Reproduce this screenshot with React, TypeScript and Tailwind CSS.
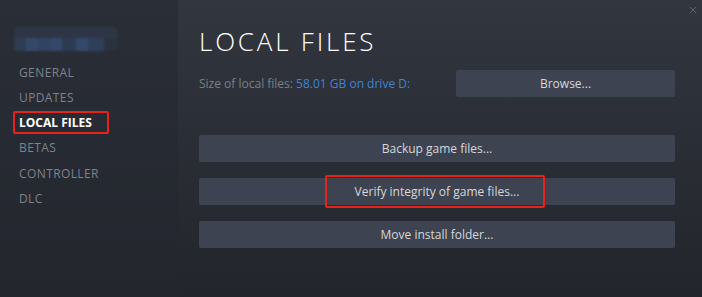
import { X } from "lucide-react";

const navItems = ["GENERAL", "UPDATES", "LOCAL FILES", "BETAS", "CONTROLLER", "DLC"];

const actions = ["Backup game files...", "Verify integrity of game files...", "Move install folder..."];

export default function App() {
    return (
        <div
            className="relative flex w-[702px] h-[297px] overflow-hidden"
            style={{ fontFamily: '"Open Sans", "Liberation Sans", sans-serif' }}
        >
            <aside className="w-[178px] shrink-0 bg-gradient-to-b from-[#2a2e37] to-[#23262d] pt-[27px]">
                {/* blurred game title */}
                <div className="ml-[14px] w-[104px] h-[24px] flex flex-col rounded-r-md overflow-hidden blur-[1px]">
                    <div className="h-[11px] bg-[#2e3645]" />
                    <div className="h-[13px] flex">
                        <div className="w-[12px] bg-[#2f3d52]" />
                        <div className="w-[12px] bg-[#34496a]" />
                        <div className="w-[12px] bg-[#314360]" />
                        <div className="w-[12px] bg-[#33486a]" />
                        <div className="w-[14px] bg-[#2d3b52]" />
                        <div className="w-[12px] bg-[#34496a]" />
                        <div className="w-[16px] bg-[#2f405b]" />
                        <div className="flex-1 bg-[#2b323f]" />
                    </div>
                </div>

                <nav className="mt-[9px] flex flex-col gap-[0.25px]">
                    {navItems.map((item) => {
                        const active = item === "LOCAL FILES";
                        return (
                            <div
                                key={item}
                                className={`relative h-[25px] flex items-center pl-[19px] text-[12px] ${
                                    active ? "text-white font-bold" : "text-[#7d828b] font-medium tracking-[0.4px]"
                                }`}
                            >
                                {item}
                                {active && (
                                    <span className="absolute left-[13px] top-[0px] w-[96px] h-[23px] border-2 border-[#e8231c] rounded-[2px]" />
                                )}
                            </div>
                        );
                    })}
                </nav>
            </aside>

            <main className="flex-1 bg-gradient-to-b from-[#32363f] to-[#22252b] pl-[21px] pr-[27px] pt-[28px]">
                <h1 className="text-[26px] leading-[26px] font-light text-white tracking-[2.8px]">LOCAL FILES</h1>

                <div className="mt-[16px] flex items-center justify-between">
                    <p className="text-[12px] text-[#7b8089]">
                        Size of local files: <span className="text-[#3f82d8]">58.01 GB on drive D:</span>
                    </p>
                    <button className="w-[219px] h-[27px] rounded-[2px] bg-[#3d4350] text-[12px] text-[#d6d8db]">
                        Browse...
                    </button>
                </div>

                <div className="mt-[38px] flex flex-col gap-[16px]">
                    {actions.map((label) => (
                        <button
                            key={label}
                            className="relative h-[27px] rounded-[2px] bg-[#3d4350] text-[12px] text-[#d6d8db]"
                        >
                            {label}
                            {label.startsWith("Verify") && (
                                <span className="absolute left-[126px] top-[-3px] w-[220px] h-[33px] border-2 border-[#e8231c] rounded-[2px]" />
                            )}
                        </button>
                    ))}
                </div>
            </main>

            <X className="absolute top-[4px] right-[3px] w-[12px] h-[12px] text-[#6e737c]" strokeWidth={1.5} />
        </div>
    );
}
